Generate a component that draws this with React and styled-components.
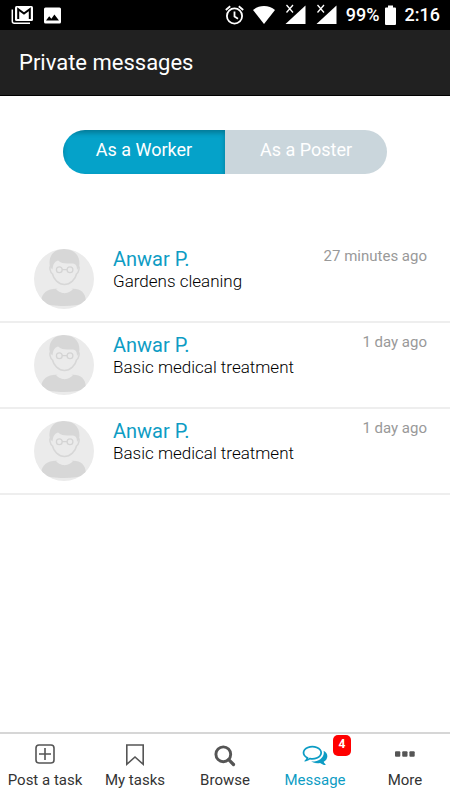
import React, { useState } from 'react';
import styled, { createGlobalStyle } from 'styled-components';

const GlobalStyle = createGlobalStyle`
  * {
    box-sizing: border-box;
  }
  body {
    margin: 0;
    background: #fff;
    font-family: Roboto, sans-serif;
    color: #222;
  }
  button {
    font-family: inherit;
  }
`;

const Screen = styled.div`
  display: flex;
  flex-direction: column;
  min-height: 100vh;
`;

const StatusBar = styled.div`
  display: flex;
  align-items: center;
  justify-content: space-between;
  height: 30px;
  padding: 0 10px 0 11px;
  background: #000;
  color: #fff;
  font-size: 18px;
  font-weight: 500;
  line-height: 30px;
`;

const StatusGroup = styled.div`
  display: flex;
  align-items: center;
  gap: ${props => props.$gap}px;
`;

const StatusIcon = styled.svg`
  display: block;
  fill: #fff;
`;

const Header = styled.header`
  display: flex;
  align-items: center;
  height: 66px;
  padding: 0 19px;
  background: #212121;
  border-bottom: 1px solid #000;
`;

const Title = styled.h1`
  margin: 0;
  color: #fff;
  font-size: 22px;
  font-weight: 400;
  line-height: 28px;
`;

const Main = styled.main`
  flex: 1;
`;

const Switcher = styled.div`
  display: flex;
  width: 72%;
  height: 44px;
  margin: 34px auto 63px;
  border-radius: 22px;
  overflow: hidden;
`;

const SwitchButton = styled.button`
  flex: 1;
  padding: 0 0 4px;
  border: 0;
  background: ${props => (props.$active ? '#05a2c9' : '#cad6dc')};
  box-shadow: ${props => (props.$active ? 'inset 0 3px 5px rgba(0, 0, 0, 0.25)' : 'none')};
  color: #fff;
  font-size: 18px;
  line-height: 24px;
  cursor: pointer;
`;

const MessageList = styled.ul`
  margin: 0;
  padding: 0;
  list-style: none;
`;

const MessageItem = styled.li`
  border-bottom: 2px solid #eee;
`;

const MessageLink = styled.a`
  display: flex;
  align-items: flex-start;
  height: 84px;
  padding: 12px 23px 0 34px;
  color: inherit;
  text-decoration: none;
`;

const Avatar = styled.svg`
  flex: none;
  width: 60px;
  height: 60px;
  margin-right: 19px;
`;

const MessageText = styled.div`
  flex: 1;
`;

const Sender = styled.div`
  color: #0d9cc4;
  font-size: 20px;
  line-height: 21px;
`;

const Task = styled.div`
  color: #000;
  font-size: 17px;
  font-weight: 300;
  line-height: 22px;
`;

const Time = styled.time`
  color: #999;
  font-size: 15px;
  line-height: 15px;
`;

const TabBar = styled.nav`
  position: sticky;
  bottom: 0;
  display: grid;
  grid-template-columns: repeat(5, 1fr);
  height: 68px;
  border-top: 2px solid #d6d6d6;
  background: #fff;
`;

const Tab = styled.a`
  position: relative;
  display: flex;
  flex-direction: column;
  align-items: center;
  gap: 1px;
  padding-top: 7px;
  color: ${props => (props.$active ? '#0d9cc4' : '#333')};
  font-size: 15px;
  line-height: 20px;
  white-space: nowrap;
  text-decoration: none;
`;

const TabIcon = styled.svg`
  display: block;
  width: 28px;
  height: 28px;
  color: ${props => (props.$active ? '#0d9cc4' : '#555')};
`;

const Badge = styled.span`
  position: absolute;
  top: 1px;
  right: 9px;
  width: 18px;
  height: 21px;
  border-radius: 5px;
  background: #f00;
  color: #fff;
  font-size: 12px;
  font-weight: 700;
  line-height: 18px;
  text-align: center;
`;

const Person = () => (
  <Avatar viewBox="0 0 60 60" aria-hidden="true">
    <defs>
      <clipPath id="avatar-circle">
        <circle cx="30" cy="30" r="30" />
      </clipPath>
    </defs>
    <g clipPath="url(#avatar-circle)">
      <rect width="60" height="60" fill="#ebebeb" />
      <path
        d="M7 54c0-8 4-13 12-14l5-.5c4 6 9 6 13 0l5 .5c7 1 10 6 10 14-6 2-14 3-22 3S13 56 7 54z"
        fill="#d7d7d7"
      />
      <path d="M22 40c4 5.500 13 5.500 17 0l-4-2v-6h-9v6z" fill="#ebebeb" />
      <path
        d="M17 17c-2 1-1 6 1.500 8 1 5 6 10.500 12 10.500S41.500 30 42.500 25c2.500-2 3.500-7 1.500-8L40 9H21z"
        fill="#ebebeb"
        stroke="#d7d7d7"
        strokeWidth="1.500"
      />
      <path
        d="M16 18C14 9 18 0 30 0s17 9 15 18l-2 3c0-4-1-6-4-6.500-6-.5-11 1-15-3-3 1-5 3-5.500 9z"
        fill="#d7d7d7"
      />
      <g fill="none" stroke="#d4d4d4" strokeWidth="1.300">
        <circle cx="25.300" cy="20.700" r="2.900" />
        <circle cx="36" cy="20.700" r="2.900" />
        <path d="M28.200 20.700h4.900" />
      </g>
    </g>
  </Avatar>
);

const PlusSquare = () => (
  <TabIcon viewBox="0 0 28 28" fill="none" stroke="currentColor" strokeWidth="1.600" aria-hidden="true">
    <rect x="5" y="4" width="18" height="18" rx="3" />
    <path d="M14 7v12M8 13h12" />
  </TabIcon>
);

const Bookmark = () => (
  <TabIcon viewBox="0 0 28 28" fill="none" stroke="currentColor" strokeWidth="1.600" aria-hidden="true">
    <path d="M5.800 4h16.400v19.300L14 16l-8.200 7.300z" />
  </TabIcon>
);

const Search = () => (
  <TabIcon viewBox="0 0 28 28" fill="none" stroke="currentColor" aria-hidden="true">
    <circle cx="12.300" cy="13.300" r="7.400" strokeWidth="2.900" />
    <path d="M17.700 18.700l4.800 4.800" strokeWidth="3.200" strokeLinecap="round" />
  </TabIcon>
);

const Comments = () => (
  <TabIcon $active viewBox="-120 -85 2032 2032" fill="currentColor" aria-hidden="true">
    <path d="M704 384q-153 0-286 52t-211.500 141-78.500 191q0 82 53 158t149 132l97 56-35 84q34-20 62-39l44-31 53 10q78 14 153 14 153 0 286-52t211.500-141 78.500-191-78.500-191-211.500-141-286-52zm0-128q191 0 353.500 68.500t256.500 186.500 94 257-94 257-256.500 186.500-353.500 68.500q-86 0-176-16-124 88-278 128-36 9-86 16h-3q-11 0-20.500-8t-11.500-21q-1-3-1-6.500t.5-6.500 2-6l2.500-5 3.500-5.500 4-5 4.500-5 4-4.500q5-6 23-25t26-29.500 22.500-29 25-38.500 20.500-44q-124-72-195-177t-71-224q0-139 94-257t256.500-186.500 353.500-68.500zm822 1169q10 24 20.500 44t25 38.500 22.500 29 26 29.500 23 25q1 1 4 4.500t4.500 5 4 5 3.500 5.500l2.500 5 2 6 .5 6.500-1 6.500q-3 14-13 22t-22 7q-50-7-86-16-154-40-278-128-90 16-176 16-271 0-472-132 58 4 88 4 161 0 309-45t264-129q125-92 192-212t67-254q0-77-23-152 129 71 204 178t75 230q0 120-71 224.500t-195 176.500z" />
  </TabIcon>
);

const Dots = () => (
  <TabIcon viewBox="0 0 28 28" fill="currentColor" aria-hidden="true">
    <rect x="4" y="10.300" width="5.300" height="5.400" rx="1" />
    <rect x="11.200" y="10.300" width="5.300" height="5.400" rx="1" />
    <rect x="18.400" y="10.300" width="5.300" height="5.400" rx="1" />
  </TabIcon>
);

const Signal = () => (
  <StatusIcon width="22" height="22" viewBox="0 0 22 22" aria-hidden="true">
    <path d="M21.500 1.500v18.500H1.500z" />
    <path d="M2.500 1l6.500 7.500M9 1L2.500 8.500" stroke="#fff" strokeWidth="1.300" />
  </StatusIcon>
);

const messages = [
  { id: 1, sender: 'Anwar P.', task: 'Gardens cleaning', time: '27 minutes ago' },
  { id: 2, sender: 'Anwar P.', task: 'Basic medical treatment', time: '1 day ago' },
  { id: 3, sender: 'Anwar P.', task: 'Basic medical treatment', time: '1 day ago' },
];

const tabs = [
  { label: 'Post a task', icon: PlusSquare },
  { label: 'My tasks', icon: Bookmark },
  { label: 'Browse', icon: Search },
  { label: 'Message', icon: Comments, active: true, count: 4 },
  { label: 'More', icon: Dots },
];

const PhoneStatus = () => (
  <StatusBar>
    <StatusGroup $gap={11}>
      <StatusIcon width="22" height="20" viewBox="0 0 22 20" aria-hidden="true">
        <path d="M1.300 4.500v11.800a2 2 0 0 0 2 2H19" fill="none" stroke="#fff" strokeWidth="1.500" />
        <rect x="4" y="1" width="18" height="15" rx="1.500" />
        <path d="M7.200 14V4.300L13 8.600l5.800-4.300V14" fill="none" stroke="#000" strokeWidth="2" />
      </StatusIcon>
      <StatusIcon width="17" height="17" viewBox="0 0 17 17" aria-hidden="true">
        <rect y="0.500" width="17" height="16" rx="1.500" />
        <path d="M2 13.500l3.200-4.200 2.200 2.500 3-4.300 4.600 6z" fill="#000" />
      </StatusIcon>
    </StatusGroup>
    <StatusGroup $gap={9}>
      <StatusIcon width="19" height="20" viewBox="0 0 19 20" aria-hidden="true">
        <g fill="none" stroke="#fff" strokeWidth="1.800">
          <circle cx="9.500" cy="11" r="7.600" />
          <path d="M9.500 6.500V11.500l3.500 2.200M.8 5l4.400-3.700M18.200 5l-4.400-3.700" />
        </g>
      </StatusIcon>
      <StatusIcon width="22" height="20" viewBox="0 0 22 20" aria-hidden="true">
        <path d="M0 5C6-.2 16-.2 22 5L11 19z" />
      </StatusIcon>
      <Signal />
      <Signal />
      <StatusGroup $gap={5}>
        <span>99%</span>
        <StatusIcon width="11" height="20" viewBox="0 0 11 20" aria-hidden="true">
          <path d="M3 .5h5v2h2a1 1 0 0 1 1 1V19a1 1 0 0 1-1 1H1a1 1 0 0 1-1-1V3.500a1 1 0 0 1 1-1h2z" />
        </StatusIcon>
      </StatusGroup>
      <span>2:16</span>
    </StatusGroup>
  </StatusBar>
);

const App = () => {
  const [role, setRole] = useState('Worker');

  return (
    <Screen>
      <GlobalStyle />
      <PhoneStatus />
      <Header>
        <Title>Private messages</Title>
      </Header>
      <Main>
        <Switcher>
          {['Worker', 'Poster'].map(name => (
            <SwitchButton
              key={name}
              type="button"
              $active={role === name}
              aria-pressed={role === name}
              onClick={() => setRole(name)}
            >
              As a {name}
            </SwitchButton>
          ))}
        </Switcher>
        <MessageList>
          {messages.map(message => (
            <MessageItem key={message.id}>
              <MessageLink href={`#message-${message.id}`}>
                <Person />
                <MessageText>
                  <Sender>{message.sender}</Sender>
                  <Task>{message.task}</Task>
                </MessageText>
                <Time>{message.time}</Time>
              </MessageLink>
            </MessageItem>
          ))}
        </MessageList>
      </Main>
      <TabBar>
        {tabs.map(({ label, icon: Icon, active, count }) => (
          <Tab key={label} href="#" $active={active} aria-current={active ? 'page' : undefined}>
            <Icon />
            {label}
            {count && <Badge>{count}</Badge>}
          </Tab>
        ))}
      </TabBar>
    </Screen>
  );
};

export default App;
